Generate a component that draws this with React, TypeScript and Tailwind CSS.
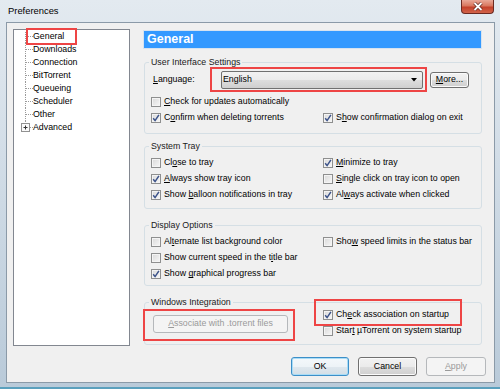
import React from "react";

function Check({ checked }: { checked?: boolean }) {
  return (
    <span className="w-[10px] h-[10px] border border-[#8e8f8f] bg-gradient-to-br from-[#d9d9d9] to-[#f7f7f7] shadow-[inset_0_0_0_1px_#f4f4f4] flex items-center justify-center shrink-0">
      {checked && (
        <svg width="8" height="8" viewBox="0 0 8 8">
          <path d="M1.2 4.2 L3.1 6.6 L6.9 0.9" stroke="#3b5289" strokeWidth="1.5" fill="none" />
        </svg>
      )}
    </span>
  );
}

function Row({ checked, children }: { checked?: boolean; children: React.ReactNode }) {
  return (
    <div className="h-[16px] flex items-center gap-[3px] whitespace-nowrap">
      <Check checked={checked} />
      <span>{children}</span>
    </div>
  );
}

function Group({
  title,
  className,
  children,
}: {
  title: string;
  className: string;
  children: React.ReactNode;
}) {
  return (
    <div className={"border border-[#d5dfe5] rounded-[3px] w-[338px] ml-[1px] px-[6px] " + className}>
      <div className="-mt-[7px] -ml-[2px] px-[2px] w-fit bg-[#f0f0f0] leading-[12px] text-[#1a1a1a]">{title}</div>
      {children}
    </div>
  );
}

const btn =
  "h-[19px] rounded-[3px] border border-[#707070] bg-[linear-gradient(#f2f2f2_0%,#ebebeb_50%,#dddddd_51%,#cfcfcf_100%)] shadow-[inset_0_0_0_1px_#fbfbfb] flex items-center justify-center";

export default function App() {
  const items = ["General", "Downloads", "Connection", "BitTorrent", "Queueing", "Scheduler", "Other", "Advanced"];
  return (
    <div className="relative w-[500px] h-[389px] overflow-hidden flex flex-col bg-[linear-gradient(180deg,#e3eaf0_0%,#d2dde7_40%,#b9cad9_100%)] font-['Liberation_Sans',Arial,sans-serif] text-[8.8px] text-black">
      {/* title bar */}
      <div className="h-[22px] shrink-0 flex items-start">
        <div className="pl-[8px] pt-[5px] text-[9.4px] leading-[12px] text-black">Preferences</div>
        <div className="ml-auto mr-[6px] w-[33px] h-[14px] rounded-b-[4px] border border-t-0 border-[#6b2a22] bg-[linear-gradient(#e9a897_0%,#d9775f_45%,#c4412a_55%,#d2644a_100%)] flex items-center justify-center">
          <svg width="12" height="9" viewBox="0 0 12 9">
            <path d="M2.5 1 L9.5 8 M9.5 1 L2.5 8" stroke="#5a2018" strokeWidth="3.2" />
            <path d="M2.5 1 L9.5 8 M9.5 1 L2.5 8" stroke="#ffffff" strokeWidth="1.8" />
          </svg>
        </div>
      </div>

      {/* client */}
      <div className="ml-[6px] mr-[5px] h-[361px] shrink-0 border border-[#8b9aa8] bg-[#f0f0f0] pl-[6px] pt-[6px] flex flex-col">
        <div className="flex">
          {/* tree */}
          <div className="w-[117px] h-[317px] border border-[#828790] bg-white shrink-0">
            {items.map((t, i) => (
              <div key={t} className="h-[13px] flex items-center leading-[13px]">
                <svg width="19" height="13" className="shrink-0">
                  <line
                    x1="11.5"
                    y1={i === 0 ? 2 : 0}
                    x2="11.5"
                    y2={i === items.length - 1 ? 2.5 : 13}
                    stroke="#9a9a9a"
                    strokeDasharray="1 1"
                  />
                  <line x1={t === "Advanced" ? 16 : 12} y1="6.5" x2="19" y2="6.5" stroke="#9a9a9a" strokeDasharray="1 1" />
                  {t === "Advanced" && (
                    <g>
                      <rect x="7.5" y="2.5" width="8" height="8" fill="#fafafa" stroke="#919191" />
                      <path d="M9.5 6.5 H13.5 M11.5 4.5 V8.5" stroke="#333" />
                    </g>
                  )}
                </svg>
                <span>{t}</span>
              </div>
            ))}
          </div>

          {/* right panel */}
          <div className="ml-[13px] w-[339px] pt-[1px]">
            <div className="h-[19px] border border-[#d6e3f0] bg-[#3399ff] flex items-center pl-[3px] text-white font-bold text-[12.5px] leading-[15px]">
              General
            </div>

            <Group title="User Interface Settings" className="mt-[13px] h-[72px]">
              <div className="mt-[3px] h-[18px] flex items-center">
                <span className="w-[70px] pl-[2px]">
                  <u>L</u>anguage:
                </span>
                <div className="w-[202px] h-[18px] rounded-[2px] border border-[#707070] bg-[linear-gradient(#f2f2f2_0%,#ebebeb_50%,#dddddd_51%,#cfcfcf_100%)] flex items-center pl-[1px] pr-[5px]">
                  <span>English</span>
                  <svg width="6" height="4" className="ml-auto">
                    <path d="M0 0 H6 L3 3.5 Z" fill="#000" />
                  </svg>
                </div>
                <div className={btn + " ml-[7px] w-[39px] !h-[16px]"}>
                  <span>
                    <u>M</u>ore...
                  </span>
                </div>
              </div>
              <div className="mt-[5px] grid grid-cols-[172px_1fr]">
                <Row>
                  <u>C</u>heck for updates automatically
                </Row>
                <div />
                <Row checked>
                  C<u>o</u>nfirm when deleting torrents
                </Row>
                <Row checked>
                  S<u>h</u>ow confirmation dialog on exit
                </Row>
              </div>
            </Group>

            <Group title="System Tray" className="mt-[12px] h-[63px]">
              <div className="mt-[3px] grid grid-cols-[172px_1fr]">
                <Row>
                  Cl<u>o</u>se to tray
                </Row>
                <Row checked>
                  <u>M</u>inimize to tray
                </Row>
                <Row checked>
                  <u>A</u>lways show tray icon
                </Row>
                <Row>
                  <u>S</u>ingle click on tray icon to open
                </Row>
                <Row checked>
                  Show <u>b</u>alloon notifications in tray
                </Row>
                <Row checked>
                  Al<u>w</u>ays activate when clicked
                </Row>
              </div>
            </Group>

            <Group title="Display Options" className="mt-[16px] h-[61px]">
              <div className="mt-[3px] grid grid-cols-[172px_1fr]">
                <Row>
                  Al<u>t</u>ernate list background color
                </Row>
                <Row>
                  Sho<u>w</u> speed limits in the status bar
                </Row>
                <Row>
                  Show current speed in the t<u>i</u>tle bar
                </Row>
                <div />
                <Row checked>
                  Show <u>g</u>raphical progress bar
                </Row>
              </div>
            </Group>

            <Group title="Windows Integration" className="mt-[16px] h-[43px]">
              <div className="flex">
                <div className="w-[172px]">
                  <div className="mt-[7px] ml-[2px] w-[135px] h-[18px] rounded-[3px] border border-[#b5b8bb] bg-[#f4f4f4] flex items-center justify-center text-[#9a9a9a]">
                    <span>
                      <u>A</u>ssociate with .torrent files
                    </span>
                  </div>
                </div>
                <div className="-mt-[1px]">
                  <Row checked>
                    Ch<u>e</u>ck association on startup
                  </Row>
                  <Row>
                    Star<u>t</u> µTorrent on system startup
                  </Row>
                </div>
              </div>
            </Group>
          </div>
        </div>

        {/* bottom buttons */}
        <div className="mt-[11px] pr-[8px] flex justify-end gap-[9px]">
          <div className="w-[58px] h-[19px] rounded-[3px] border border-[#3c8fc8] bg-[linear-gradient(#f4f8fb_0%,#edf3f7_50%,#dfe8ee_51%,#d3dee6_100%)] shadow-[inset_0_0_0_1px_#a9dcf6] flex items-center justify-center">
            OK
          </div>
          <div className={btn + " w-[59px]"}>Cancel</div>
          <div className="w-[60px] h-[19px] rounded-[3px] border border-[#b5b8bb] bg-[#f4f4f4] flex items-center justify-center text-[#9a9a9a]">
            <span>
              <u>A</u>pply
            </span>
          </div>
        </div>
      </div>
      <div className="flex-1 border-b-[2px] border-[#5aa0bd]" />

      {/* annotation boxes */}
      <div className="absolute left-[26px] top-[28px] w-[51px] h-[17px] border-[2px] border-[#ee4545]" />
      <div className="absolute left-[210px] top-[67px] w-[217px] h-[25px] border-[2px] border-[#ee4545]" />
      <div className="absolute left-[143px] top-[309px] w-[152px] h-[32px] border-[2px] border-[#ee4545]" />
      <div className="absolute left-[314px] top-[299px] w-[148px] h-[27px] border-[2px] border-[#ee4545]" />
    </div>
  );
}
